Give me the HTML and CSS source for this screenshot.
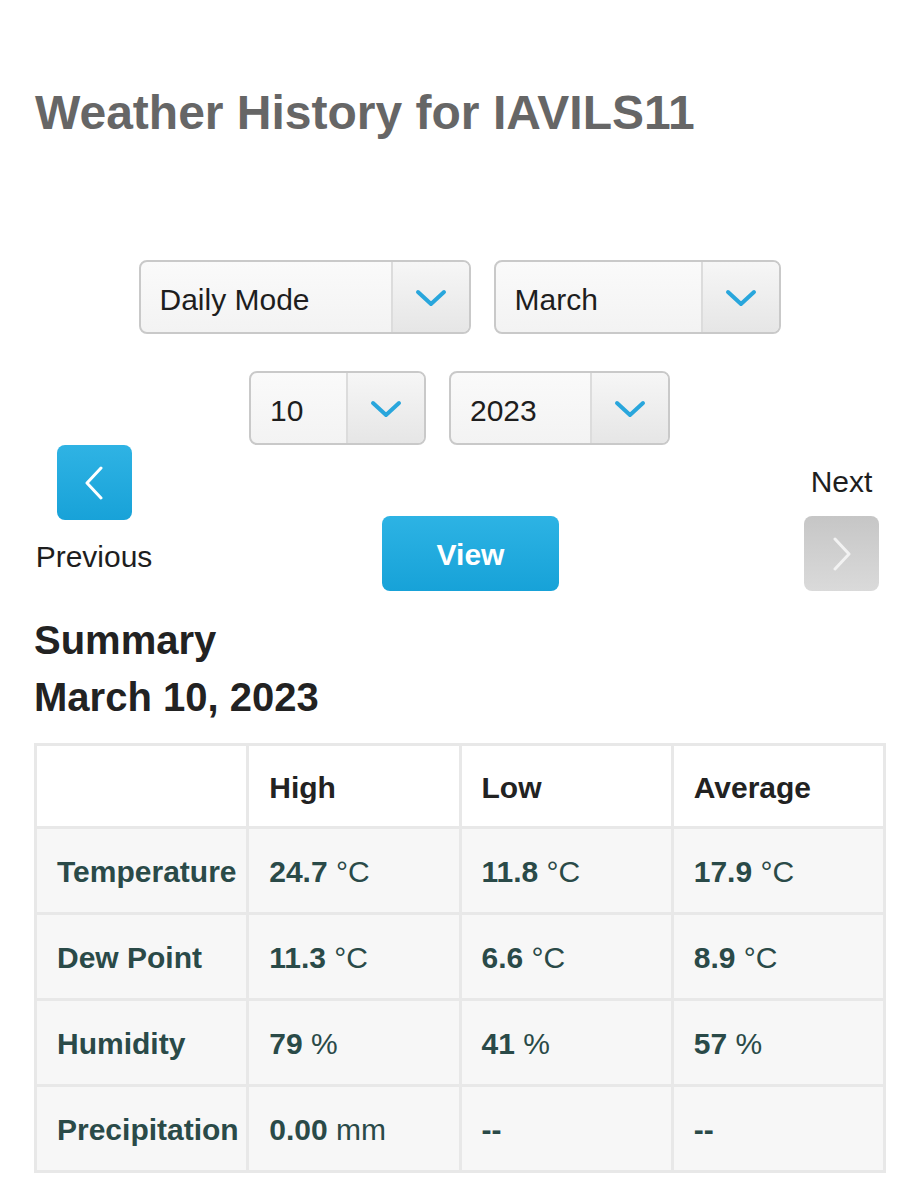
FILE: index.html
```html
<!DOCTYPE html>
<html lang="en">
<head>
<meta charset="utf-8">
<title>Weather History for IAVILS11</title>
<link rel="stylesheet" href="styles.css">
</head>
<body>
<h1 class="title">Weather History for IAVILS11</h1>

<div class="selects">
  <div class="select-row">
    <div class="select sel-mode">
      <span class="select-value">Daily Mode</span>
      <span class="select-arrow"><svg width="32" height="18" viewBox="0 0 32 18"><path d="M3 3 L16 15 L29 3" fill="none" stroke="#29a6dc" stroke-width="4" stroke-linecap="round" stroke-linejoin="round"/></svg></span>
    </div>
    <div class="select sel-month">
      <span class="select-value">March</span>
      <span class="select-arrow"><svg width="32" height="18" viewBox="0 0 32 18"><path d="M3 3 L16 15 L29 3" fill="none" stroke="#29a6dc" stroke-width="4" stroke-linecap="round" stroke-linejoin="round"/></svg></span>
    </div>
  </div>
  <div class="select-row">
    <div class="select sel-day">
      <span class="select-value">10</span>
      <span class="select-arrow"><svg width="32" height="18" viewBox="0 0 32 18"><path d="M3 3 L16 15 L29 3" fill="none" stroke="#29a6dc" stroke-width="4" stroke-linecap="round" stroke-linejoin="round"/></svg></span>
    </div>
    <div class="select sel-year">
      <span class="select-value">2023</span>
      <span class="select-arrow"><svg width="32" height="18" viewBox="0 0 32 18"><path d="M3 3 L16 15 L29 3" fill="none" stroke="#29a6dc" stroke-width="4" stroke-linecap="round" stroke-linejoin="round"/></svg></span>
    </div>
  </div>
</div>

<div class="nav">
  <div class="nav-prev">
    <div class="nav-btn btn-blue"><svg width="20" height="34" viewBox="0 0 20 34"><path d="M17 2 L3 17 L17 32" fill="none" stroke="#ffffff" stroke-width="3" stroke-linecap="round" stroke-linejoin="round"/></svg></div>
    <div class="nav-label prev-label">Previous</div>
  </div>
  <div class="view-btn">View</div>
  <div class="nav-next">
    <div class="nav-label next-label">Next</div>
    <div class="nav-btn btn-gray"><svg width="20" height="34" viewBox="0 0 20 34"><path d="M3 2 L17 17 L3 32" fill="none" stroke="#f2f2f2" stroke-width="3" stroke-linecap="round" stroke-linejoin="round"/></svg></div>
  </div>
</div>

<h2 class="summary">Summary<br>March 10, 2023</h2>

<table class="history">
  <thead>
    <tr>
      <th></th>
      <th>High</th>
      <th>Low</th>
      <th>Average</th>
    </tr>
  </thead>
  <tbody>
    <tr>
      <td class="label">Temperature</td>
      <td><b>24.7</b> °C</td>
      <td><b>11.8</b> °C</td>
      <td><b>17.9</b> °C</td>
    </tr>
    <tr>
      <td class="label">Dew Point</td>
      <td><b>11.3</b> °C</td>
      <td><b>6.6</b> °C</td>
      <td><b>8.9</b> °C</td>
    </tr>
    <tr>
      <td class="label">Humidity</td>
      <td><b>79</b> %</td>
      <td><b>41</b> %</td>
      <td><b>57</b> %</td>
    </tr>
    <tr>
      <td class="label">Precipitation</td>
      <td><b>0.00</b> mm</td>
      <td><b>--</b></td>
      <td><b>--</b></td>
    </tr>
  </tbody>
</table>
</body>
</html>
```

FILE: styles.css
```css
* { box-sizing: border-box; }

html, body {
  margin: 0;
  padding: 0;
  background: #ffffff;
}

body {
  font-family: "Liberation Sans", Arial, sans-serif;
  color: #222222;
  padding: 0 34px;
}

.title {
  margin: 85px 0 0 1px;
  font-size: 48px;
  line-height: 56px;
  font-weight: bold;
  color: #666666;
}

.selects {
  margin-top: 119px;
  display: flex;
  flex-direction: column;
  gap: 37px;
}

.select-row {
  display: flex;
  justify-content: center;
  gap: 23px;
  padding-right: 1px;
}

.select {
  height: 74px;
  display: flex;
  border: 2px solid #c9c9c9;
  border-radius: 8px;
  background: linear-gradient(#fafafa, #f3f3f3);
  overflow: hidden;
}

.sel-mode { width: 332px; }
.sel-month { width: 287px; }
.sel-day { width: 177px; }
.sel-year { width: 221px; }

.select-value {
  flex: 1;
  display: flex;
  align-items: center;
  padding-left: 19px;
  padding-top: 6px;
  font-size: 30px;
  color: #1e1e1e;
}

.select-arrow {
  width: 78px;
  display: flex;
  align-items: center;
  justify-content: center;
  border-left: 2px solid #dcdcdc;
  background: linear-gradient(#f6f6f6, #e6e6e6);
  padding-top: 2px;
}

.nav {
  display: flex;
  align-items: flex-start;
  height: 146px;
}

.nav-prev {
  width: 120px;
  display: flex;
  flex-direction: column;
  align-items: center;
}

.nav-btn {
  width: 75px;
  height: 75px;
  border-radius: 8px;
  display: flex;
  align-items: center;
  justify-content: center;
}

.btn-blue {
  background: linear-gradient(#2fb3e4, #18a2d8);
}

.btn-gray {
  background: linear-gradient(#c6c6c6, #dadada);
}

.nav-label {
  font-size: 30px;
  line-height: 34px;
  color: #1e1e1e;
}

.prev-label { margin-top: 20px; }

.view-btn {
  margin-top: 71px;
  margin-left: 228px;
  width: 177px;
  height: 75px;
  border-radius: 8px;
  background: linear-gradient(#2db3e4, #17a2d8);
  color: #ffffff;
  font-size: 30px;
  font-weight: bold;
  display: flex;
  align-items: center;
  justify-content: center;
  padding-top: 2px;
}

.nav-next {
  margin-left: auto;
  margin-right: 7px;
  margin-top: 20px;
  width: 75px;
  display: flex;
  flex-direction: column;
  align-items: center;
}

.next-label {
  margin-bottom: 17px;
  white-space: nowrap;
}

.summary {
  margin: 21px 0 0 0;
  font-size: 40px;
  line-height: 57px;
  font-weight: bold;
  color: #222222;
}

.history {
  margin-top: 17px;
  width: 852px;
  table-layout: fixed;
  border-collapse: collapse;
  border: 3px solid #e8e8e8;
  font-size: 30px;
}

.history th,
.history td {
  border: 3px solid #e8e8e8;
  padding: 0 0 0 20px;
  text-align: left;
  white-space: nowrap;
  vertical-align: middle;
}

.history th {
  height: 83px;
  padding-top: 3px;
  background: #ffffff;
  color: #222222;
  font-weight: bold;
}

.history td {
  height: 86px;
  padding-top: 3px;
  background: #f7f7f7;
  color: #2a4a48;
}

.history td.label {
  font-weight: bold;
}

.history td b {
  font-weight: bold;
}
```
